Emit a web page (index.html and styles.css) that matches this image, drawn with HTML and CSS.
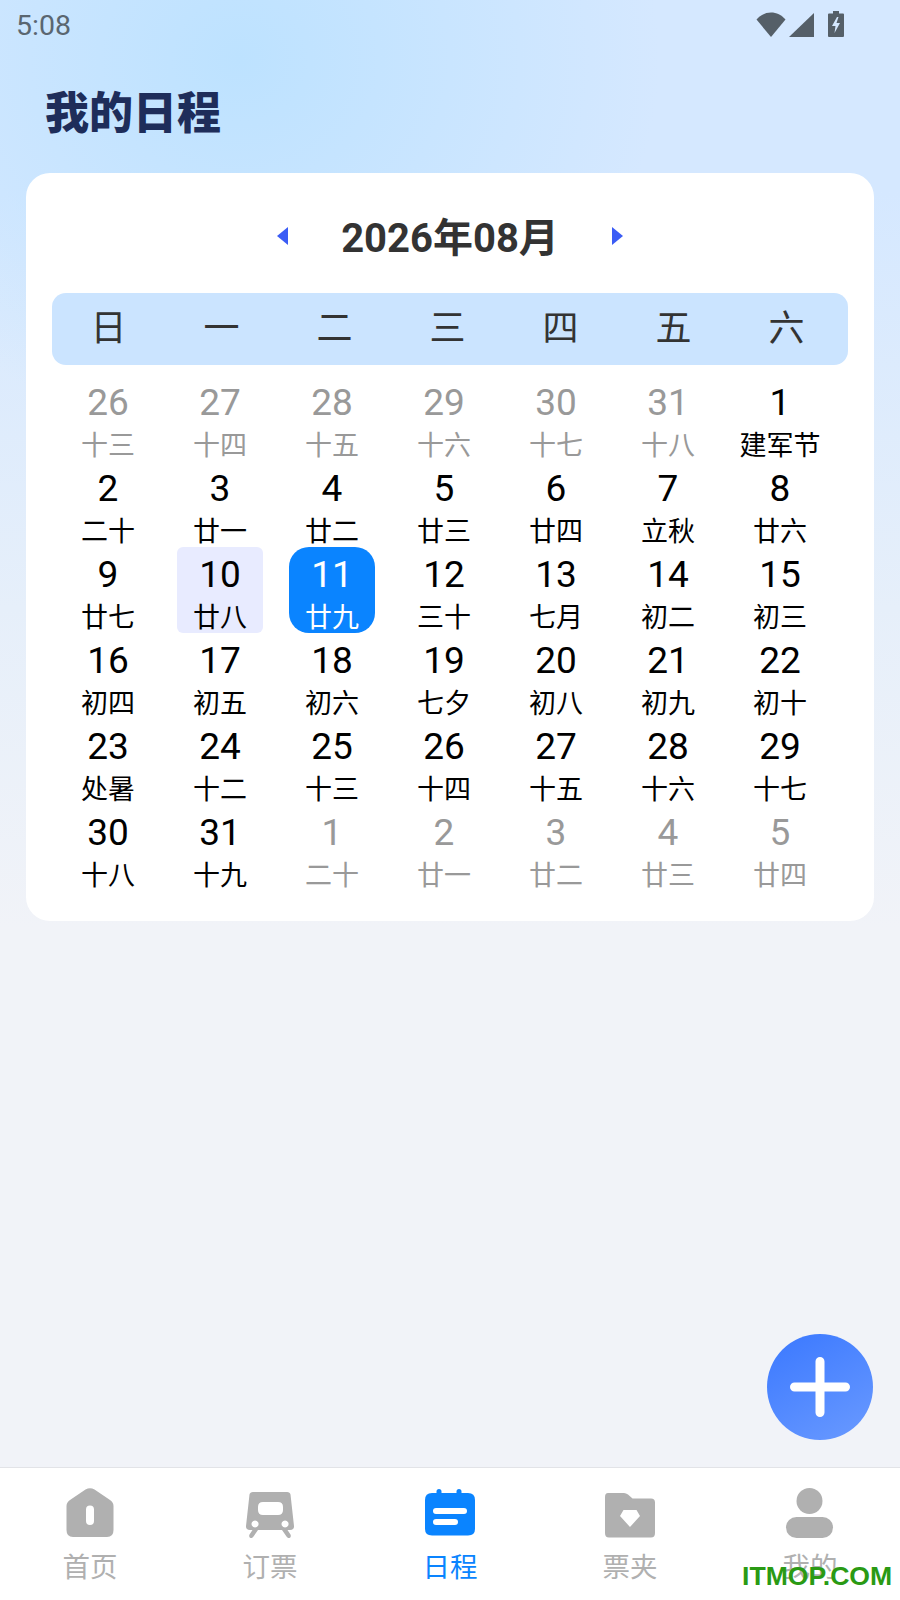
FILE: index.html
```html
<!DOCTYPE html>
<html lang="zh-CN">
<head>
<meta charset="utf-8">
<title>我的日程</title>
<link rel="stylesheet" href="styles.css">
</head>
<body>
<div class="app">
  <div class="status">
    <span class="time">5:08</span>
    <div class="status-icons">
      <svg class="ic-wifi" viewBox="0 0 30 25"><path d="M15 25 0.5 7.5C4.5 3 9.5 0.5 15 0.5S25.500 3 29.500 7.500Z"/></svg>
      <svg class="ic-signal" viewBox="0 0 25 24"><path d="M25 0V24H0Z"/></svg>
      <svg class="ic-battery" viewBox="0 0 16 26"><path fill-rule="evenodd" d="M5 0H11V2.500H15A1 1 0 0 1 16 3.500V25A1 1 0 0 1 15 26H1A1 1 0 0 1 0 25V3.500A1 1 0 0 1 1 2.500H5ZM9 6 4 15H7.500L6.500 22 12 12H8.500L10.500 6Z"/></svg>
    </div>
  </div>
  <h1 class="page-title">我的日程</h1>
  <section class="card">
    <div class="month-nav">
      <span class="arrow arrow-left"></span>
      <span class="month">2026年08月</span>
      <span class="arrow arrow-right"></span>
    </div>
    <div class="weekdays">
      <span>日</span><span>一</span><span>二</span><span>三</span><span>四</span><span>五</span><span>六</span>
    </div>
    <div class="days">
      <div class="day muted"><b>26</b><i>十三</i></div>
      <div class="day muted"><b>27</b><i>十四</i></div>
      <div class="day muted"><b>28</b><i>十五</i></div>
      <div class="day muted"><b>29</b><i>十六</i></div>
      <div class="day muted"><b>30</b><i>十七</i></div>
      <div class="day muted"><b>31</b><i>十八</i></div>
      <div class="day"><b>1</b><i>建军节</i></div>
      <div class="day"><b>2</b><i>二十</i></div>
      <div class="day"><b>3</b><i>廿一</i></div>
      <div class="day"><b>4</b><i>廿二</i></div>
      <div class="day"><b>5</b><i>廿三</i></div>
      <div class="day"><b>6</b><i>廿四</i></div>
      <div class="day"><b>7</b><i>立秋</i></div>
      <div class="day"><b>8</b><i>廿六</i></div>
      <div class="day"><b>9</b><i>廿七</i></div>
      <div class="day today"><b>10</b><i>廿八</i></div>
      <div class="day selected"><b>11</b><i>廿九</i></div>
      <div class="day"><b>12</b><i>三十</i></div>
      <div class="day"><b>13</b><i>七月</i></div>
      <div class="day"><b>14</b><i>初二</i></div>
      <div class="day"><b>15</b><i>初三</i></div>
      <div class="day"><b>16</b><i>初四</i></div>
      <div class="day"><b>17</b><i>初五</i></div>
      <div class="day"><b>18</b><i>初六</i></div>
      <div class="day"><b>19</b><i>七夕</i></div>
      <div class="day"><b>20</b><i>初八</i></div>
      <div class="day"><b>21</b><i>初九</i></div>
      <div class="day"><b>22</b><i>初十</i></div>
      <div class="day"><b>23</b><i>处暑</i></div>
      <div class="day"><b>24</b><i>十二</i></div>
      <div class="day"><b>25</b><i>十三</i></div>
      <div class="day"><b>26</b><i>十四</i></div>
      <div class="day"><b>27</b><i>十五</i></div>
      <div class="day"><b>28</b><i>十六</i></div>
      <div class="day"><b>29</b><i>十七</i></div>
      <div class="day"><b>30</b><i>十八</i></div>
      <div class="day"><b>31</b><i>十九</i></div>
      <div class="day muted"><b>1</b><i>二十</i></div>
      <div class="day muted"><b>2</b><i>廿一</i></div>
      <div class="day muted"><b>3</b><i>廿二</i></div>
      <div class="day muted"><b>4</b><i>廿三</i></div>
      <div class="day muted"><b>5</b><i>廿四</i></div>
    </div>
  </section>
  <div class="spacer"></div>
  <nav class="tabbar">
    <div class="tab">
      <svg class="tab-icon" viewBox="0 0 50 50"><path fill-rule="evenodd" d="M20.500 1.500Q25 -1 29.500 1.500L45 12Q48.500 14.500 48.500 18V42Q48.500 49 42 49H8Q1.500 49 1.500 42V18Q1.500 14.500 5 12ZM25 17.500A4 4 0 0 0 21 21.500V33A4 4 0 0 0 29 33V21.500A4 4 0 0 0 25 17.500Z"/></svg>
      <span>首页</span>
    </div>
    <div class="tab">
      <svg class="tab-icon" viewBox="0 0 50 50"><path fill-rule="evenodd" d="M8 4H42Q45 4 45.500 6.500L49 38Q49.300 42 45 42H42.500L45.500 46.500Q46.500 49 44.500 50 43 50.500 41.500 48.500L37 42H13L8.500 48.500Q7 50.500 5.500 50 3.500 49 4.500 46.500L7.500 42H5Q0.700 42 1 38L4.500 6.500Q5 4 8 4ZM18 14Q13 14 13 19V22Q13 27 18 27H33Q38 27 38 22V19Q38 14 33 14ZM10 32.500A3.500 3.500 0 1 0 10.100 32.500ZM40 32.500A3.500 3.500 0 1 0 40.100 32.500Z"/></svg>
      <span>订票</span>
    </div>
    <div class="tab active">
      <svg class="tab-icon" viewBox="0 0 50 50"><path fill-rule="evenodd" d="M14 1A2.500 2.500 0 0 1 16.500 3.500V5H31.500V3.500A2.500 2.500 0 0 1 36.500 3.500V5H43Q50 5 50 12V41Q50 47.500 43 47.500H7Q0 47.500 0 41V12Q0 5 7 5H11.500V3.500A2.500 2.500 0 0 1 14 1ZM11 20A3 3 0 0 0 11 26H39A3 3 0 0 0 39 20ZM11 31A3 3 0 0 0 11 37H30A3 3 0 0 0 30 31Z"/></svg>
      <span>日程</span>
    </div>
    <div class="tab">
      <svg class="tab-icon" viewBox="0 0 50 50"><path fill-rule="evenodd" d="M3 5H19Q21 5 23 6.500L27.500 10.500H46Q50 10.500 50 14.500V45Q50 49.500 46 49.500H4Q0 49.500 0 45V9Q0 5 3 5ZM18.500 22 15 28 25 39 35 28 31.500 22Z"/></svg>
      <span>票夹</span>
    </div>
    <div class="tab">
      <svg class="tab-icon" viewBox="0 0 50 50"><circle cx="24.500" cy="13" r="13"/><rect x="1" y="29" width="47" height="21" rx="10.500"/></svg>
      <span>我的</span>
    </div>
  </nav>
  <button class="fab" aria-label="新建日程">
    <svg viewBox="0 0 60 60"><path d="M30 4.500V55.500M4.500 30H55.500"/></svg>
  </button>
  <span class="watermark">ITMOP.COM</span>
</div>
</body>
</html>
```
FILE: styles.css
```css
* { box-sizing: border-box; margin: 0; padding: 0; }
html, body { width: 900px; height: 1600px; overflow: hidden; }
body { font-family: Roboto, "Noto Sans CJK SC", sans-serif; background: #f1f3f8; }
.app {
  position: relative;
  width: 900px;
  height: 1600px;
  display: flex;
  flex-direction: column;
  background:
    radial-gradient(ellipse 420px 380px at 240px 60px, #bde2ff 0%, rgba(191,226,255,0) 100%),
    linear-gradient(180deg, #d5e8ff 0%, #d5e8ff 12%, #e6effa 38%, #f1f3f8 58%, #f1f3f8 100%);
}
.status {
  height: 50px;
  padding: 10px 56px 0 16px;
  display: flex;
  justify-content: space-between;
  align-items: flex-start;
  flex: none;
}
.time { font-size: 28.5px; line-height: 32px; color: #5a6670; }
.status-icons { display: flex; align-items: flex-start; gap: 3px; padding-top: 1px; }
.status-icons svg { fill: #555f68; display: block; }
.ic-wifi { width: 30px; height: 25px; margin-top: 1px; }
.ic-signal { width: 25px; height: 24px; margin-top: 2px; margin-right: 11px; }
.ic-battery { width: 16px; height: 26px; }
.page-title {
  flex: none;
  margin: 32px 0 0 45px;
  height: 91px;
  font-family: "Noto Sans CJK SC", sans-serif;
  font-size: 44px;
  line-height: 56px;
  font-weight: 900;
  color: #1e2d5a;
}
.card {
  flex: none;
  margin: 0 26px;
  height: 748px;
  background: #fff;
  border-radius: 24px;
  padding: 0 26px;
}
.month-nav {
  height: 120px;
  display: flex;
  align-items: center;
  justify-content: center;
  gap: 53px;
  padding-top: 10px;
}
.month { font-size: 40px; line-height: 50px; font-weight: 700; color: #333; position: relative; top: 1px; }
.arrow { width: 0; height: 0; border-top: 9px solid transparent; border-bottom: 9px solid transparent; margin-top: -4px; }
.arrow-left { border-right: 11px solid #3b5cf5; }
.arrow-right { border-left: 11px solid #3b5cf5; }
.weekdays {
  height: 72px;
  padding-right: 5px;
  display: grid;
  grid-template-columns: repeat(7, 1fr);
  align-items: center;
  text-align: center;
  background: #cbe4ff;
  border-radius: 14px;
  font-size: 36px;
  line-height: 72px;
  color: #333;
}
.days {
  margin-top: 10px;
  width: 784px;
  display: grid;
  grid-template-columns: repeat(7, 112px);
  grid-auto-rows: 86px;
}
.day {
  width: 86px;
  height: 86px;
  justify-self: center;
  display: flex;
  flex-direction: column;
  align-items: center;
  color: #000;
}
.day b { font-weight: 400; font-size: 37px; line-height: 52px; margin: 2px 0 1px; white-space: nowrap; }
.day i { font-style: normal; font-size: 27px; line-height: 31px; padding-top: 1px; white-space: nowrap; }
.muted { color: #999; }
.today { background: #e8ebff; border-radius: 6px; }
.selected { background: #0a84ff; border-radius: 20px; color: #fff; }
.spacer { flex: 1; }
.tabbar {
  flex: none;
  height: 133px;
  background: #fff;
  border-top: 1px solid #e2e3e7;
  display: grid;
  grid-template-columns: repeat(5, 1fr);
}
.tab {
  display: flex;
  flex-direction: column;
  align-items: center;
  padding-top: 20px;
  color: #b0b0b0;
  font-size: 27.500px;
  line-height: 34px;
}
.tab-icon { width: 50px; height: 50px; fill: #b0b0b0; display: block; margin-bottom: 13px; }
.tab.active { color: #0a84ff; }
.tab.active .tab-icon { fill: #0a84ff; }
.fab {
  position: absolute;
  left: 767px;
  top: 1334px;
  width: 106px;
  height: 106px;
  border: 0;
  border-radius: 50%;
  background: linear-gradient(150deg, #3a78ff, #6a9aff);
  display: flex;
  align-items: center;
  justify-content: center;
}
.fab svg { width: 60px; height: 60px; fill: none; stroke: #fff; stroke-width: 9; stroke-linecap: round; }
.watermark {
  position: absolute;
  left: 742px;
  top: 1561px;
  font-family: "Liberation Sans", sans-serif;
  font-weight: 700;
  font-size: 26.600px;
  line-height: 30px;
  color: #2a9a14;
}
```
